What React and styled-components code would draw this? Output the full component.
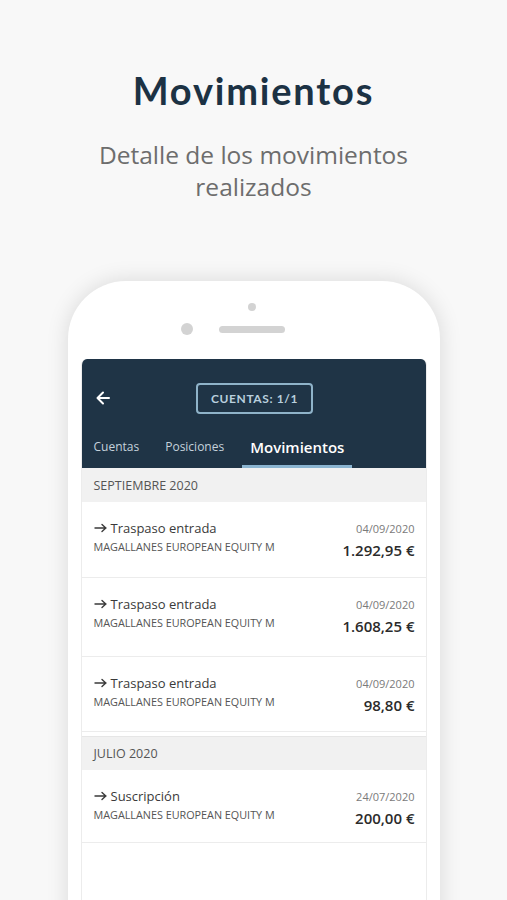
import React from "react";
import styled, { createGlobalStyle } from "styled-components";

const Global = createGlobalStyle`
  html, body { margin: 0; padding: 0; background: #f8f8f8; overflow: hidden; }
  body { font-family: "Open Sans", "Liberation Sans", sans-serif; }
`;

const Page = styled.div`
  width: 507px;
  height: 900px;
  overflow: hidden;
  display: flex;
  flex-direction: column;
  align-items: center;
  background: #f8f8f8;
`;

const Title = styled.h1`
  margin: 66px 0 0;
  font-family: "Lato", "Liberation Sans", sans-serif;
  font-weight: 700;
  font-size: 38px;
  line-height: 48px;
  letter-spacing: 1.8px;
  color: #1c3244;
`;

const Subtitle = styled.p`
  margin: 25px 0 0;
  width: 340px;
  text-align: center;
  font-family: "Open Sans", sans-serif;
  font-weight: 400;
  font-size: 24.5px;
  line-height: 32px;
  color: #6d6d6d;
`;

const Phone = styled.div`
  margin-top: 78px;
  width: 372px;
  flex: 0 0 auto;
  height: 700px;
  background: #fff;
  border-radius: 58px 58px 0 0;
  box-shadow: 0 0 22px rgba(0, 0, 0, 0.13);
  display: flex;
  flex-direction: column;
`;

const PhoneTop = styled.div`
  height: 78px;
  display: flex;
  flex-direction: column;
  align-items: center;
`;

const Camera = styled.div`
  margin-top: 22px;
  width: 8px;
  height: 8px;
  border-radius: 50%;
  background: #d3d3d3;
  margin-left: -4px;
`;

const SensorRow = styled.div`
  margin-top: 12px;
  display: flex;
  align-items: center;
  gap: 26px;
  margin-left: -42px;
`;

const Dot = styled.div`
  width: 12px;
  height: 12px;
  border-radius: 50%;
  background: #d3d3d3;
`;

const Speaker = styled.div`
  width: 66px;
  height: 7px;
  border-radius: 4px;
  background: #d3d3d3;
`;

const Screen = styled.div`
  margin: 0 13px;
  flex: 1;
  border: 1px solid #ececec;
  border-top: none;
  border-radius: 6px 6px 0 0;
  overflow: hidden;
  background: #fff;
`;

const Header = styled.div`
  background: #1f3446;
  height: 109px;
  display: flex;
  flex-direction: column;
`;

const TopBar = styled.div`
  position: relative;
  margin-top: 24px;
  height: 30px;
  display: flex;
  justify-content: center;
  align-items: center;
`;

const Back = styled.div`
  position: absolute;
  left: 13px;
  top: 7px;
  width: 16px;
  height: 16px;
  color: #fff;
  display: flex;
`;

const AccountButton = styled.div`
  box-sizing: border-box;
  width: 117px;
  height: 31px;
  margin-left: 2px;
  border: 2px solid #8fb3c9;
  border-radius: 4px;
  display: flex;
  align-items: center;
  justify-content: center;
  font-family: "Lato", sans-serif;
  font-weight: 700;
  font-size: 12px;
  letter-spacing: 0.6px;
  color: #b9cfdd;
`;

const Tabs = styled.div`
  margin-top: auto;
  display: flex;
  align-items: flex-end;
  padding-left: 12px;
  gap: 26px;
`;

const Tab = styled.div`
  position: relative;
  height: 37px;
  display: flex;
  align-items: center;
  font-size: ${(p) => (p.$active ? "15px" : "12px")};
  font-weight: ${(p) => (p.$active ? 600 : 400)};
  color: ${(p) => (p.$active ? "#fff" : "#c5d2dc")};
  padding-bottom: 6px;
  box-sizing: border-box;
  &::after {
    content: "";
    display: ${(p) => (p.$active ? "block" : "none")};
    position: absolute;
    left: -8px;
    right: -8px;
    bottom: 0;
    height: 3px;
    background: #8ab4d0;
  }
`;

const SectionHeader = styled.div`
  height: ${(p) => (p.$first ? 34 : 33)}px;
  margin-top: ${(p) => (p.$first ? 0 : 4)}px;
  background: #f1f1f1;
  display: flex;
  align-items: center;
  padding-left: 12px;
  font-size: 12.5px;
  color: #555;
  border-top: ${(p) => (p.$first ? "none" : "1px solid #e6e6e6")};
`;

const Row = styled.div`
  height: ${(p) => p.$h}px;
  box-sizing: border-box;
  padding: 16px 11px 0 12px;
  border-bottom: 1px solid #ececec;
  display: grid;
  grid-template-columns: 1fr auto;
  grid-template-rows: 20px 24px;
  align-items: center;
`;

const Concept = styled.div`
  display: flex;
  align-items: center;
  gap: 4px;
  font-size: 13px;
  color: #3a3a3a;
`;

const ArrowIcon = styled.svg`
  width: 13px;
  height: 10px;
  flex: 0 0 auto;
`;

const DateText = styled.div`
  font-size: 11px;
  color: #7a7a7a;
  text-align: right;
`;

const Fund = styled.div`
  font-size: 10.8px;
  color: #555;
  align-self: start;
  margin-top: 1px;
`;

const Amount = styled.div`
  font-size: 15px;
  font-weight: 600;
  color: #2b2b2b;
  text-align: right;
`;

const movements = [
  {
    month: "SEPTIEMBRE 2020",
    items: [
      { c: "Traspaso entrada", d: "04/09/2020", a: "1.292,95 €", h: 76 },
      { c: "Traspaso entrada", d: "04/09/2020", a: "1.608,25 €", h: 79 },
      { c: "Traspaso entrada", d: "04/09/2020", a: "98,80 €", h: 75 },
    ],
  },
  {
    month: "JULIO 2020",
    items: [{ c: "Suscripción", d: "24/07/2020", a: "200,00 €", h: 73 }],
  },
];

export default function App() {
  return (
    <>
      <Global />
      <Page>
        <Title>Movimientos</Title>
        <Subtitle>Detalle de los movimientos realizados</Subtitle>
        <Phone>
          <PhoneTop>
            <Camera />
            <SensorRow>
              <Dot />
              <Speaker />
            </SensorRow>
          </PhoneTop>
          <Screen>
            <Header>
              <TopBar>
                <Back>
                  <svg width="16" height="16" viewBox="0 0 16 16" fill="none" stroke="currentColor" strokeWidth="2" strokeLinecap="round" strokeLinejoin="round">
                    <path d="M14 8H2.5M8 2.5L2.5 8 8 13.5" />
                  </svg>
                </Back>
                <AccountButton>CUENTAS: 1/1</AccountButton>
              </TopBar>
              <Tabs>
                <Tab>Cuentas</Tab>
                <Tab>Posiciones</Tab>
                <Tab $active>Movimientos</Tab>
              </Tabs>
            </Header>
            {movements.map((g, gi) => (
              <React.Fragment key={g.month}>
                <SectionHeader $first={gi === 0}>{g.month}</SectionHeader>
                {g.items.map((it, i) => (
                  <Row key={i} $h={it.h}>
                    <Concept>
                      <ArrowIcon viewBox="0 0 13 10" fill="none" stroke="#3a3a3a" strokeWidth="1.4" strokeLinecap="round" strokeLinejoin="round">
                        <path d="M1 5h11M8 1.5L11.8 5 8 8.5" />
                      </ArrowIcon>
                      {it.c}
                    </Concept>
                    <DateText>{it.d}</DateText>
                    <Fund>MAGALLANES EUROPEAN EQUITY M</Fund>
                    <Amount>{it.a}</Amount>
                  </Row>
                ))}
              </React.Fragment>
            ))}
          </Screen>
        </Phone>
      </Page>
    </>
  );
}
